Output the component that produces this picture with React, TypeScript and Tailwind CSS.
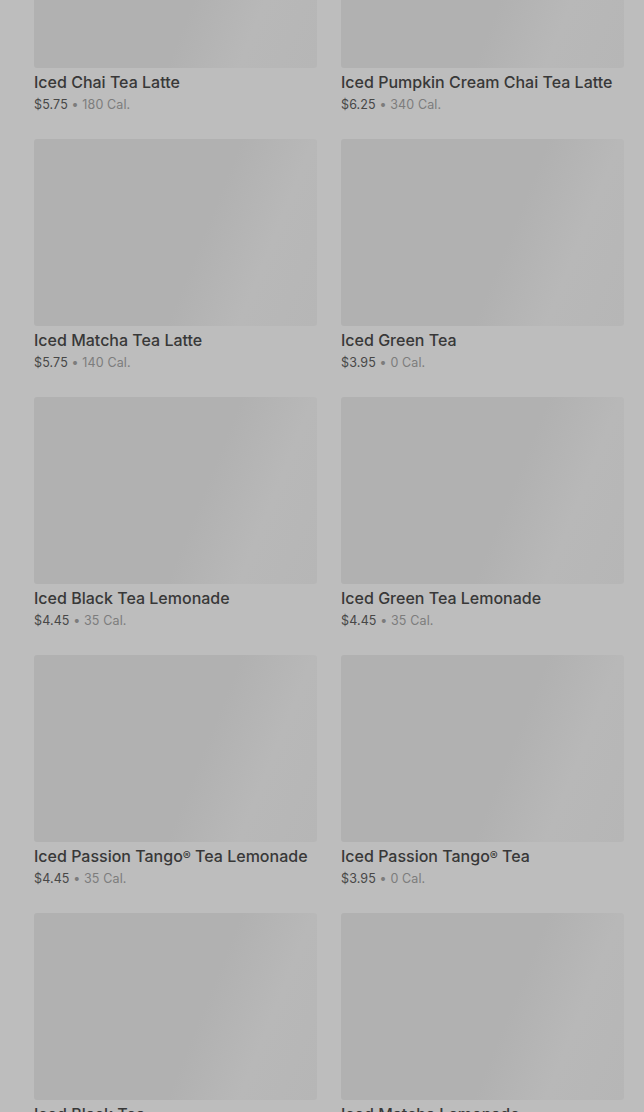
const ITEMS = [
  { name: "Iced Chai Tea Latte", price: "$5.75", cal: "180 Cal." },
  { name: "Iced Pumpkin Cream Chai Tea Latte", price: "$6.25", cal: "340 Cal." },
  { name: "Iced Matcha Tea Latte", price: "$5.75", cal: "140 Cal." },
  { name: "Iced Green Tea", price: "$3.95", cal: "0 Cal." },
  { name: "Iced Black Tea Lemonade", price: "$4.45", cal: "35 Cal." },
  { name: "Iced Green Tea Lemonade", price: "$4.45", cal: "35 Cal." },
  { name: "Iced Passion Tango® Tea Lemonade", price: "$4.45", cal: "35 Cal." },
  { name: "Iced Passion Tango® Tea", price: "$3.95", cal: "0 Cal." },
  { name: "Iced Black Tea", price: "$3.95", cal: "0 Cal." },
  { name: "Iced Matcha Lemonade", price: "$4.45", cal: "35 Cal." },
];

function Name({ text }: { text: string }) {
  // render the ® a bit smaller, like the reference
  const parts = text.split("®");
  if (parts.length === 1) return <>{text}</>;
  return (
    <>
      {parts[0]}
      <span className="text-[12px] align-[2px]">®</span>
      {parts[1]}
    </>
  );
}

export default function App() {
  return (
    <main className="h-[1112px] overflow-hidden bg-[#bdbdbd] font-['Inter',sans-serif]">
      <div className="-mt-[119px] pl-[34px] pr-[20px] grid grid-cols-2 gap-x-[24px] gap-y-[25px]">
        {ITEMS.map((item) => (
          <div key={item.name} className="flex flex-col">
            <div className="h-[187px] rounded-[3px] bg-[linear-gradient(112deg,#b1b1b1_0%,#b1b1b1_58%,#b8b8b8_78%,#b6b6b6_100%)]" />
            <h3 className="mt-[3px] text-[16px] leading-[22px] font-medium text-[#383838] whitespace-nowrap">
              <Name text={item.name} />
            </h3>
            <p className="mt-[3px] text-[12.5px] leading-[18px] text-[#474747] tracking-[0.01em]">
              {item.price}
              <span className="text-[#7c7c7c]"> • {item.cal}</span>
            </p>
          </div>
        ))}
      </div>
    </main>
  );
}
